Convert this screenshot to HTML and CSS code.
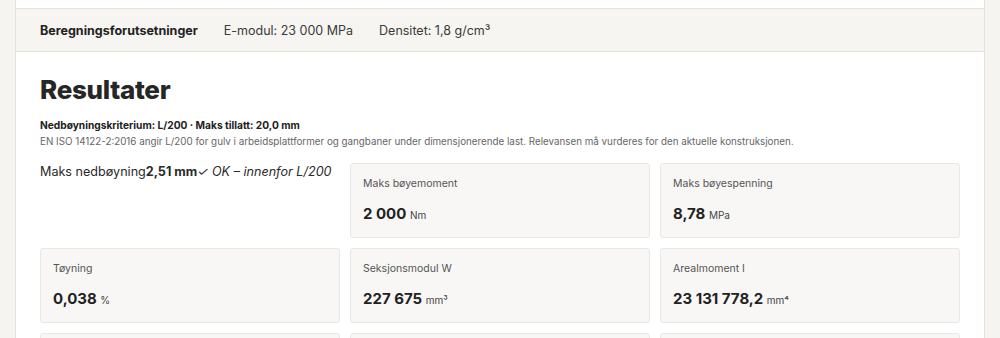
FILE: index.html
```html
<!DOCTYPE html>
<html lang="no">
<head>
<meta charset="utf-8">
<title>Resultater</title>
<link rel="stylesheet" href="styles.css">
</head>
<body>
<div class="page">
  <main class="card">
    <div class="top-gap"></div>
    <div class="assumptions">
      <span class="assumptions-title">Beregningsforutsetninger</span>
      <span class="assumption">E-modul: 23 000 MPa</span>
      <span class="assumption">Densitet: 1,8 g/cm³</span>
    </div>
    <section class="results">
      <h2 class="results-title">Resultater</h2>
      <p class="criterion">Nedbøyningskriterium: L/200 · Maks tillatt: 20,0 mm</p>
      <p class="note">EN ISO 14122-2:2016 angir L/200 for gulv i arbeidsplattformer og gangbaner under dimensjonerende last. Relevansen må vurderes for den aktuelle konstruksjonen.</p>
      <div class="grid">
        <div class="highlight"><span>Maks nedbøyning</span><strong>2,51 mm</strong><em>✓ OK – innenfor L/200</em></div>
        <div class="metric">
          <div class="metric-label">Maks bøyemoment</div>
          <div class="metric-value">2 000 <span class="unit">Nm</span></div>
        </div>
        <div class="metric">
          <div class="metric-label">Maks bøyespenning</div>
          <div class="metric-value">8,78 <span class="unit">MPa</span></div>
        </div>
        <div class="metric">
          <div class="metric-label">Tøyning</div>
          <div class="metric-value">0,038 <span class="unit">%</span></div>
        </div>
        <div class="metric">
          <div class="metric-label">Seksjonsmodul W</div>
          <div class="metric-value">227 675 <span class="unit">mm³</span></div>
        </div>
        <div class="metric">
          <div class="metric-label">Arealmoment I</div>
          <div class="metric-value">23 131 778,2 <span class="unit">mm⁴</span></div>
        </div>
        <div class="metric">
          <div class="metric-label">Egenvekt</div>
          <div class="metric-value">0 <span class="unit">kg</span></div>
        </div>
        <div class="metric">
          <div class="metric-label">Maks skjærkraft</div>
          <div class="metric-value">0 <span class="unit">N</span></div>
        </div>
        <div class="metric">
          <div class="metric-label">Utnyttelse</div>
          <div class="metric-value">0 <span class="unit">%</span></div>
        </div>
      </div>
    </section>
  </main>
</div>
</body>
</html>
```

FILE: styles.css
```css
* { box-sizing: border-box; }
html, body {
  margin: 0;
  padding: 0;
  background: #f5f4f1;
  font-family: Inter, "Noto Sans", sans-serif;
  color: #222;
  overflow: hidden;
}
.page {
  padding: 0 15px;
}
.card {
  background: #fff;
  border-left: 1px solid #e3e1dc;
  border-right: 1px solid #e3e1dc;
}
.top-gap { height: 8px; }
.assumptions {
  display: flex;
  align-items: center;
  gap: 26px;
  height: 44px;
  padding: 0 24px;
  background: #f6f5f2;
  border-top: 1px solid #e3e1dc;
  border-bottom: 1px solid #e3e1dc;
  font-size: 12.5px;
  color: #3a3a3a;
}
.assumptions-title {
  font-weight: 700;
  color: #222;
}
.results {
  padding: 21px 24px 0;
}
.results-title {
  margin: 0;
  font-size: 26px;
  line-height: 34px;
  font-weight: 800;
  color: #262626;
  letter-spacing: -0.3px;
}
.criterion {
  margin: 11px 0 0;
  font-size: 10.2px;
  line-height: 14px;
  font-weight: 700;
  color: #222;
}
.note {
  margin: 3px 0 0;
  font-size: 9.8px;
  line-height: 14px;
  color: #666;
}
.grid {
  margin-top: 14px;
  display: grid;
  grid-template-columns: repeat(3, 1fr);
  gap: 10px;
}
.highlight {
  font-size: 12.6px;
  line-height: 18px;
  color: #2a2a2a;
  white-space: nowrap;
}
.highlight strong { font-weight: 700; }
.highlight em { font-style: italic; }
.metric {
  background: #f8f7f5;
  border: 1px solid #e9e7e3;
  border-radius: 3px;
  padding: 12px;
}
.metric-label {
  font-size: 10.5px;
  line-height: 16px;
  color: #555;
}
.metric-value {
  margin-top: 12px;
  font-size: 15px;
  line-height: 20px;
  font-weight: 700;
  color: #222;
}
.unit {
  font-size: 10px;
  font-weight: 400;
  color: #444;
}
```
